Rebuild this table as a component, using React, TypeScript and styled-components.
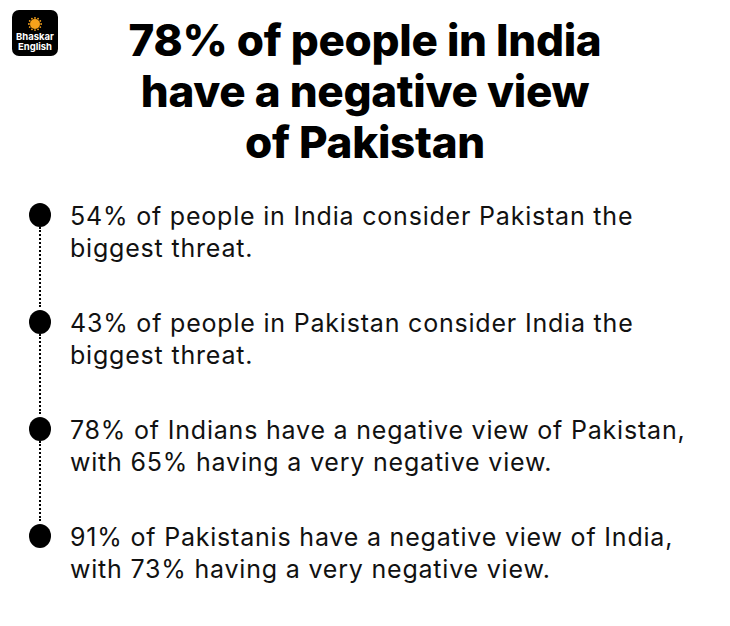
import React from 'react'
import styled, { createGlobalStyle } from 'styled-components'

const GlobalStyle = createGlobalStyle`
  html, body {
    margin: 0;
    padding: 0;
    background: #ffffff;
  }
  body {
    font-family: Inter, "Noto Sans", sans-serif;
    color: #000;
  }
`

const Page = styled.main`
  width: 730px;
  height: 626px;
  background: #fff;
  overflow: hidden;
`

const Header = styled.header`
  display: grid;
  grid-template-columns: 70px 1fr 70px;
  align-items: start;
`

const Logo = styled.div`
  margin: 10px 0 0 12px;
  width: 46px;
  height: 46px;
  border-radius: 7px;
  background: #000;
  display: flex;
  flex-direction: column;
  align-items: center;
  padding-top: 7px;
  box-sizing: border-box;
`

const LogoText = styled.span`
  margin-top: 1px;
  font-family: Inter, sans-serif;
  font-weight: 700;
  font-size: 9.5px;
  line-height: 10px;
  color: #fff;
  text-align: center;
`

const Title = styled.h1`
  margin: 0;
  padding-top: 15px;
  font-family: Inter, sans-serif;
  font-weight: 800;
  font-size: 44px;
  line-height: 51px;
  text-align: center;
  letter-spacing: -0.3px;
`

const List = styled.ul`
  list-style: none;
  margin: 32px 0 0;
  padding: 0 0 0 29px;
`

const Item = styled.li`
  display: grid;
  grid-template-columns: 22px 1fr;
  column-gap: 19px;
`

const Rail = styled.div`
  display: flex;
  flex-direction: column;
  align-items: center;
`

const Dot = styled.span`
  width: 22px;
  height: 24px;
  margin-top: 3px;
  border-radius: 50%;
  background: #000;
  flex: none;
`

const Connector = styled.span<{ $hidden?: boolean }>`
  flex: 1;
  border-left: 2px dotted ${p => (p.$hidden ? 'transparent' : '#000')};
`

const Text = styled.p<{ $last?: boolean }>`
  margin: 0;
  padding-bottom: ${p => (p.$last ? 0 : 43)}px;
  font-size: 25px;
  line-height: 32px;
  font-weight: 400;
  letter-spacing: 0.8px;
  color: #111;
`

const Sun = () => (
  <svg width="14" height="14" viewBox="0 0 14 14">
    <circle cx="7" cy="7" r="5" fill="#f7a21b" />
    {Array.from({ length: 12 }).map((_, i) => {
      const a = (i / 12) * Math.PI * 2
      return (
        <circle key={i} cx={7 + Math.cos(a) * 6.1} cy={7 + Math.sin(a) * 6.1} r="0.9" fill="#f7a21b" />
      )
    })}
  </svg>
)

const points = [
  ['54% of people in India consider Pakistan the', 'biggest threat.'],
  ['43% of people in Pakistan consider India the', 'biggest threat.'],
  ['78% of Indians have a negative view of Pakistan,', 'with 65% having a very negative view.'],
  ['91% of Pakistanis have a negative view of India,', 'with 73% having a very negative view.'],
]

const App = () => {
  return (
    <React.Fragment>
      <GlobalStyle />
      <Page>
        <Header>
          <Logo>
            <Sun />
            <LogoText>Bhaskar<br />English</LogoText>
          </Logo>
          <Title>
            78% of people in India<br />
            have a negative view<br />
            of Pakistan
          </Title>
          <div />
        </Header>
        <List>
          {points.map((lines, i) => {
            const last = i === points.length - 1
            return (
              <Item key={i}>
                <Rail>
                  <Dot />
                  <Connector $hidden={last} />
                </Rail>
                <Text $last={last}>
                  {lines[0]}<br />{lines[1]}
                </Text>
              </Item>
            )
          })}
        </List>
      </Page>
    </React.Fragment>
  )
}

export default App
